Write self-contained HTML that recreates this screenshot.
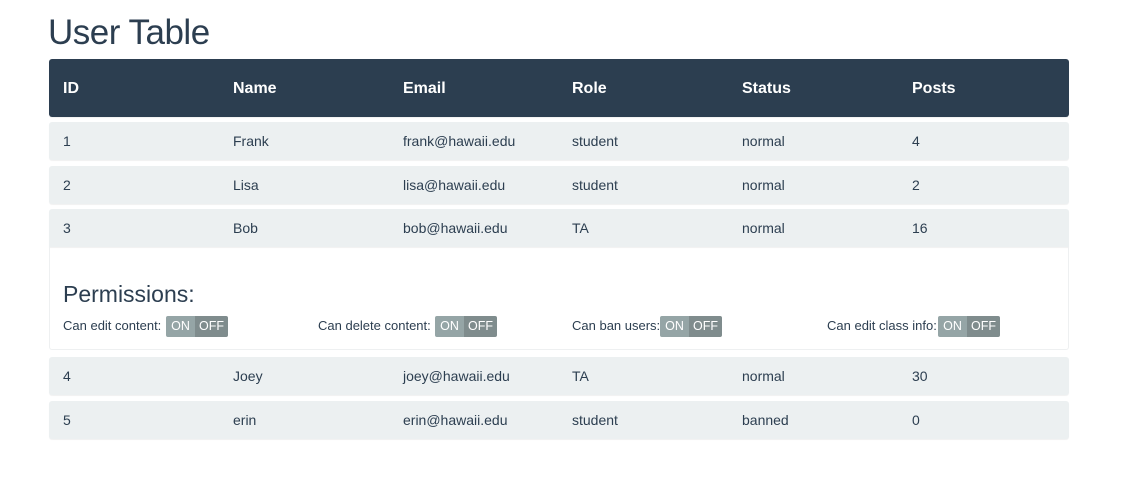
<!DOCTYPE html><html><head><style>
body{margin:0;background:#fff;font-family:"Liberation Sans",sans-serif;color:#2c3e50;width:1122px;height:499px;overflow:hidden;position:relative}
.a{position:absolute}
h1{position:absolute;left:48px;top:13px;margin:0;font-weight:normal;font-size:35px;color:#2c3e50;letter-spacing:-0.5px}
.row{position:absolute;left:49px;width:1020px;background:#ecf0f1;border-radius:3px;font-size:14px;box-shadow:0 1px 1px rgba(0,0,0,.06)}
.row span{position:absolute;top:50%;transform:translateY(-50%)}
.hd{background:#2c3e50;color:#fff;font-weight:bold;font-size:16px}
.hd span{margin-top:1px}
.tg{position:absolute;top:316px;height:21px;border-radius:2px;overflow:hidden;font-size:12.5px;color:#fff;display:flex}
.tg b{font-weight:normal;background:#95a5a6;width:29px;text-align:center;line-height:21px}
.tg i{font-style:normal;background:#7f8c8d;width:33px;text-align:center;line-height:21px}
.lb{position:absolute;top:318px;font-size:13px}
</style></head><body>
<h1>User Table</h1>
<div class="row hd" style="top:59px;height:58px"><span style="left:14px">ID</span><span style="left:184px">Name</span><span style="left:354px">Email</span><span style="left:523px">Role</span><span style="left:693px">Status</span><span style="left:863px">Posts</span></div>
<div class="row" style="top:122px;height:38px"><span style="left:14px">1</span><span style="left:184px">Frank</span><span style="left:354px">frank@hawaii.edu</span><span style="left:523px">student</span><span style="left:693px">normal</span><span style="left:863px">4</span></div>
<div class="row" style="top:166px;height:38px"><span style="left:14px">2</span><span style="left:184px">Lisa</span><span style="left:354px">lisa@hawaii.edu</span><span style="left:523px">student</span><span style="left:693px">normal</span><span style="left:863px">2</span></div>
<div class="row" style="top:209px;height:38px;border-radius:3px 3px 0 0"><span style="left:14px">3</span><span style="left:184px">Bob</span><span style="left:354px">bob@hawaii.edu</span><span style="left:523px">TA</span><span style="left:693px">normal</span><span style="left:863px">16</span></div>
<div class="a" style="left:49px;top:247px;width:1018px;height:102px;border:1px solid #eef0f1;border-top:none;border-radius:0 0 3px 3px"></div>
<div class="a" style="left:63px;top:281px;font-size:23px">Permissions:</div>
<div class="lb" style="left:63px">Can edit content:</div><div class="tg" style="left:166px"><b>ON</b><i>OFF</i></div>
<div class="lb" style="left:318px">Can delete content:</div><div class="tg" style="left:435px"><b>ON</b><i>OFF</i></div>
<div class="lb" style="left:572px">Can ban users:</div><div class="tg" style="left:660px"><b>ON</b><i>OFF</i></div>
<div class="lb" style="left:827px">Can edit class info:</div><div class="tg" style="left:938px"><b>ON</b><i>OFF</i></div>
<div class="row" style="top:357px;height:38px"><span style="left:14px">4</span><span style="left:184px">Joey</span><span style="left:354px">joey@hawaii.edu</span><span style="left:523px">TA</span><span style="left:693px">normal</span><span style="left:863px">30</span></div>
<div class="row" style="top:401px;height:38px"><span style="left:14px">5</span><span style="left:184px">erin</span><span style="left:354px">erin@hawaii.edu</span><span style="left:523px">student</span><span style="left:693px">banned</span><span style="left:863px">0</span></div>
</body></html>
